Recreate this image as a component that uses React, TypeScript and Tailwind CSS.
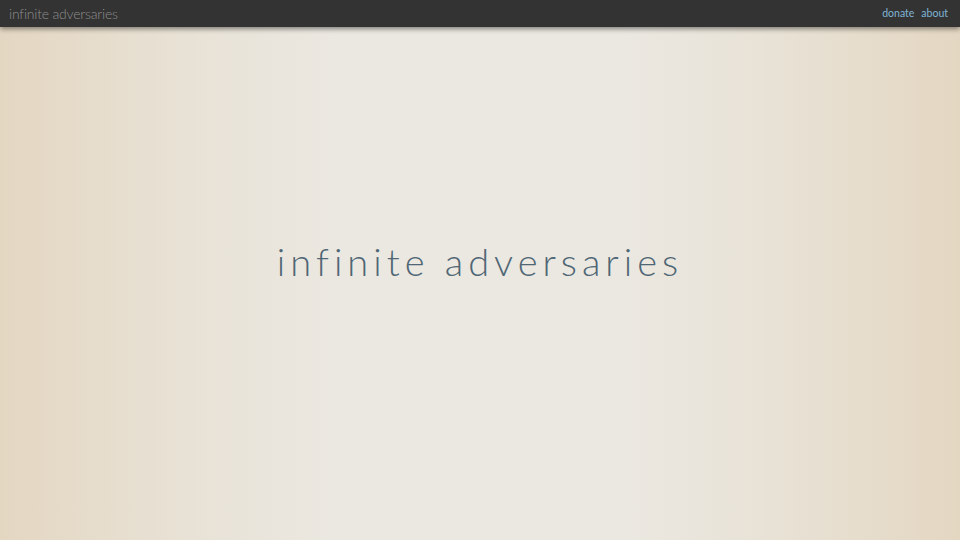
export default function App() {
  return (
    <div className="relative flex h-[540px] w-[960px] flex-col overflow-hidden bg-[linear-gradient(to_right,#e4d7c2_0%,#e8e2d6_20%,#ebe8e1_35%,#ebe8e1_65%,#e8e2d6_80%,#e4d7c2_100%)] font-['Lato',sans-serif]">
      <header className="relative z-10 flex h-[27px] items-center justify-between bg-[#333333] pl-[9px] pr-[12px] shadow-[0_2px_5px_rgba(0,0,0,0.45)]">
        <span className="text-[14px] font-light tracking-[-0.2px] text-[#8d8d8d]">infinite adversaries</span>
        <nav className="flex gap-[7px] text-[10.5px] text-[#80b4d6]">
          <a>donate</a>
          <a>about</a>
        </nav>
      </header>
      <main className="flex flex-1 items-center justify-center pb-[44px]">
        <h1 className="text-[38px] font-light tracking-[5px] text-[#4f6675]">infinite adversaries</h1>
      </main>
    </div>
  );
}
